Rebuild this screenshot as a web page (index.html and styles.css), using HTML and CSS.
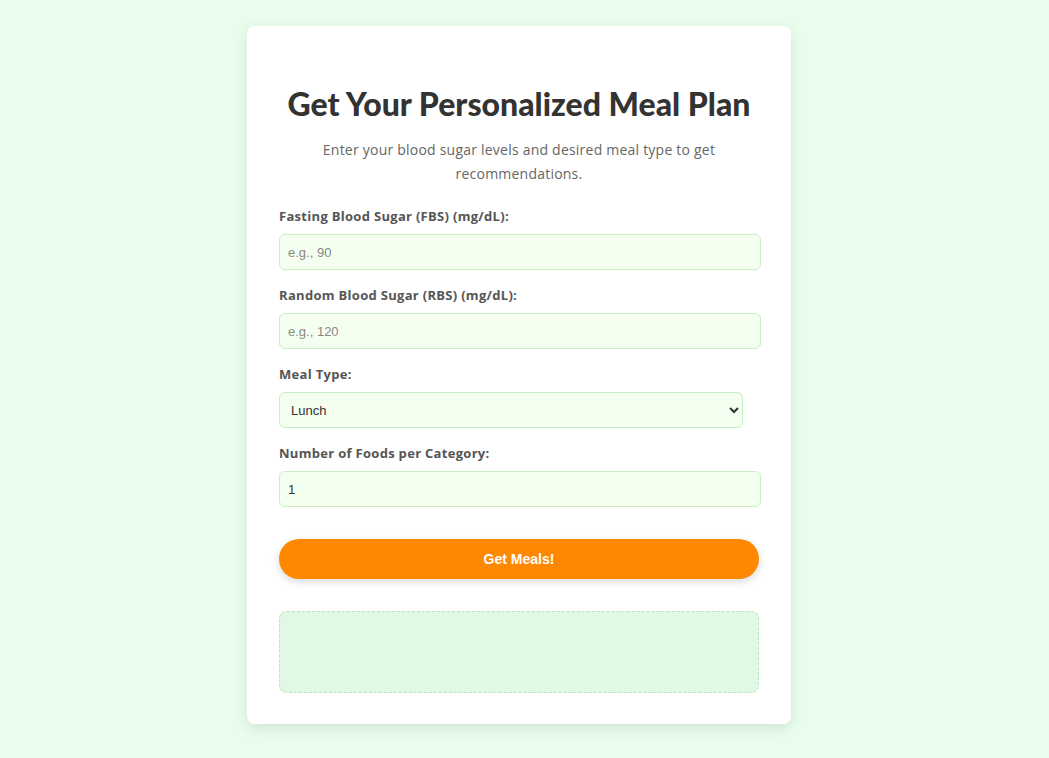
FILE: index.html
```html
<!DOCTYPE html>
<html lang="en">
<head>
<meta charset="utf-8">
<title>Meal Plan</title>
<link rel="stylesheet" href="styles.css">
</head>
<body>
<main class="page">
  <section class="card">
    <h1 class="title">Get Your Personalized Meal Plan</h1>
    <p class="subtitle">Enter your blood sugar levels and desired meal type to get recommendations.</p>
    <form class="form">
      <div class="field">
        <label class="label" for="fbs">Fasting Blood Sugar (FBS) (mg/dL):</label>
        <input class="input" id="fbs" type="number" placeholder="e.g., 90">
      </div>
      <div class="field">
        <label class="label" for="rbs">Random Blood Sugar (RBS) (mg/dL):</label>
        <input class="input" id="rbs" type="number" placeholder="e.g., 120">
      </div>
      <div class="field">
        <label class="label" for="meal">Meal Type:</label>
        <select class="select" id="meal">
          <option>Breakfast</option>
          <option selected>Lunch</option>
          <option>Dinner</option>
          <option>Snack</option>
        </select>
      </div>
      <div class="field">
        <label class="label" for="num">Number of Foods per Category:</label>
        <input class="input" id="num" type="text" value="1">
      </div>
      <button class="button" type="button">Get Meals!</button>
    </form>
    <div class="result"></div>
  </section>
</main>
</body>
</html>
```

FILE: styles.css
```css
* { box-sizing: border-box; }
html, body { margin: 0; padding: 0; }
body {
  background: #e9fdec;
  font-family: "Open Sans", "Liberation Sans", sans-serif;
  color: #333;
}
.page {
  display: flex;
  justify-content: center;
  padding: 26px 11px 0 0;
  min-height: 758px;
}
.card {
  width: 544px;
  height: 698px;
  background: #fff;
  border-radius: 8px;
  padding: 32px;
  box-shadow: 0 4px 14px rgba(0, 0, 0, 0.1);
}
.title {
  margin: 28px -20px 16px;
  font-family: Lato, "Open Sans", sans-serif;
  font-size: 32px;
  line-height: 36px;
  font-weight: 900;
  text-align: center;
  color: #333;
  white-space: nowrap;
}
.subtitle {
  margin: 0 0 20px;
  font-size: 14px;
  line-height: 24px;
  letter-spacing: 0.22px;
  color: #666;
  text-align: center;
  padding: 0 10px;
}
.form {
  display: flex;
  flex-direction: column;
}
.field {
  display: flex;
  flex-direction: column;
  align-items: flex-start;
  margin-bottom: 15px;
}
.label {
  font-size: 13px;
  line-height: 20px;
  font-weight: 700;
  letter-spacing: 0.3px;
  color: #555;
  margin-bottom: 8px;
}
.input, .select {
  height: 36px;
  border: 1px solid #c6efc4;
  border-radius: 6px;
  background: #f5fff0;
  font-family: "Liberation Sans", Arial, sans-serif;
  font-size: 13px;
  color: #333;
  padding: 0 8px;
  outline: none;
}
.input { width: 482px; }
.select { width: 464px; padding: 0 7px; }
.input::placeholder { color: #888; }
.input::-webkit-outer-spin-button,
.input::-webkit-inner-spin-button { -webkit-appearance: none; margin: 0; }
.button {
  margin-top: 17px;
  width: 480px;
  height: 40px;
  border: none;
  border-radius: 20px;
  background: #ff8800;
  color: #fff;
  font-family: "Liberation Sans", Arial, sans-serif;
  font-size: 14px;
  font-weight: 700;
  box-shadow: 0 3px 8px rgba(0, 0, 0, 0.15);
}
.result {
  margin-top: 32px;
  height: 82px;
  border: 1px dashed #b3e8c2;
  border-radius: 8px;
  background: #e0f8e4;
}
```
